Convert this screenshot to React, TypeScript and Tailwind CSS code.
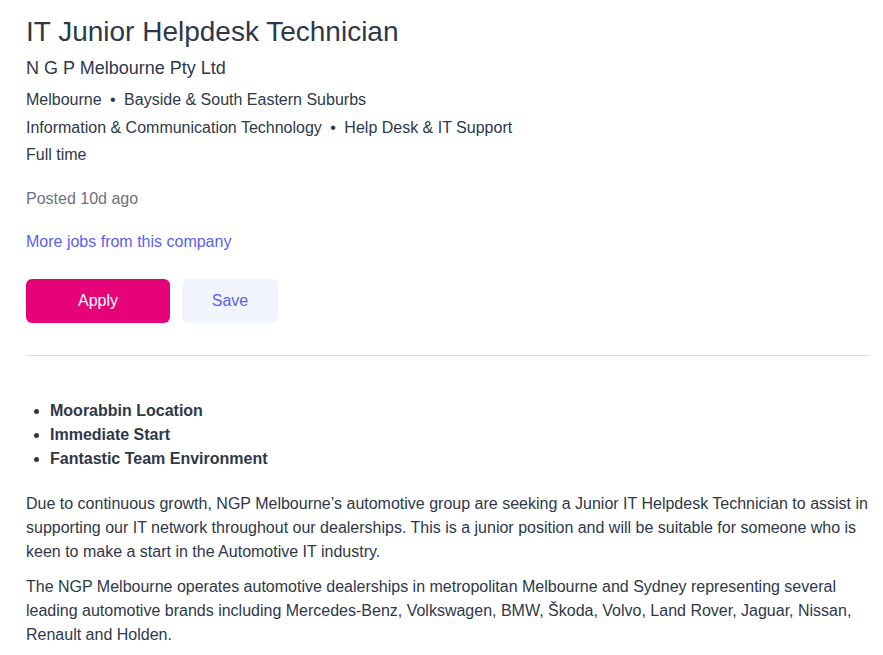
export default function App() {
  return (
    <div className="min-h-screen bg-white font-['Liberation_Sans',Arial,sans-serif] text-[#2e3849]">
      <div className="pl-[26px] pr-[13px] pt-[14px]">
        <h1 className="text-[28px] leading-[36px]">IT Junior Helpdesk Technician</h1>
        <div className="mt-[6px] text-[18px] leading-[24px]">N G P Melbourne Pty Ltd</div>
        <div className="mt-[6px] text-[16px] leading-[27.5px]">
          <div>
            Melbourne <span className="mx-[4px]">•</span> Bayside &amp; South Eastern Suburbs
          </div>
          <div>
            Information &amp; Communication Technology <span className="mx-[4px]">•</span> Help Desk &amp; IT Support
          </div>
          <div>Full time</div>
        </div>
        <div className="mt-[16px] text-[16px] leading-[28px] text-[#6b7280]">Posted 10d ago</div>
        <div className="mt-[15px] text-[16px] leading-[28px] text-[#5b5ff0]">More jobs from this company</div>
        <div className="mt-[23px] flex gap-3">
          <button className="h-[44px] w-[144px] rounded-[6px] bg-[#e60278] text-[16px] text-white">Apply</button>
          <button className="h-[44px] w-[96px] rounded-[6px] bg-[#f1f4fd] text-[16px] text-[#5b5ff0]">Save</button>
        </div>
        <hr className="mt-[32px] border-t border-[#d9dce1]" />
        <ul className="mt-[43px] list-disc pl-[24px] text-[16px] font-bold leading-[24px]">
          <li>Moorabbin Location</li>
          <li>Immediate Start</li>
          <li>Fantastic Team Environment</li>
        </ul>
        <p className="mt-[21px] text-[16px] leading-[24px]">
          Due to continuous growth, NGP Melbourne’s automotive group are seeking a Junior IT Helpdesk Technician to assist in supporting our IT network throughout our dealerships. This is a junior position and will be suitable for someone who is keen to make a start in the Automotive IT industry.
        </p>
        <p className="mt-[11px] text-[16px] leading-[24px]">
          The NGP Melbourne operates automotive dealerships in metropolitan Melbourne and Sydney representing several leading automotive brands including Mercedes-Benz, Volkswagen, BMW, Škoda, Volvo, Land Rover, Jaguar, Nissan, Renault and Holden.
        </p>
      </div>
    </div>
  );
}
